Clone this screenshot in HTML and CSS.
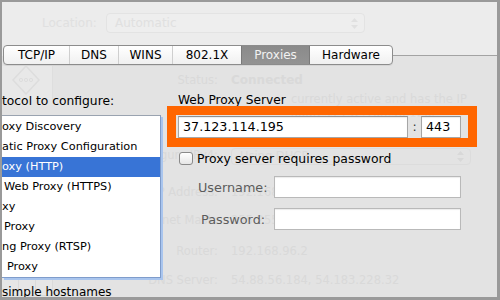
FILE: index.html
```html
<!DOCTYPE html>
<html>
<head>
<meta charset="utf-8">
<link rel="stylesheet" href="styles.css">
</head>
<body>
<div class="frame">
  <div class="ghost">
    <div class="g-left">
      <div class="g-side">
        <svg class="g-diamond" width="28" height="30" viewBox="0 0 28 30"><path d="M14 1 L27 15 L14 29 L1 15 Z" fill="none" stroke="#dddddd" stroke-width="1.5"/><circle cx="9" cy="15" r="1.6" fill="none" stroke="#dddddd"/><circle cx="14" cy="15" r="1.6" fill="none" stroke="#dddddd"/><circle cx="19" cy="15" r="1.6" fill="none" stroke="#dddddd"/></svg>
      </div>
      <div class="g-btns"><span></span><span></span><span></span></div>
    </div>
    <div class="g-right">
      <div class="g-row r-status"><span class="gl">Status:</span><span class="gv gb">Connected</span></div>
      <div class="g-desc">
        <div>currently active and has the IP</div>
        <div>address 192.168.96.126.</div>
      </div>
      <div class="g-row r-conf"><span class="gl">Configure IPv4:</span><span class="g-pop">Using DHCP<svg class="arrows" width="7" height="11" viewBox="0 0 7 11"><path d="M3.5 0 L7 4 L0 4 Z M3.5 11 L7 7 L0 7 Z" fill="#d8d8d8"/></svg></span></div>
      <div class="g-row r-addr"><span class="gl">IP Address:</span><span class="gv">192.168.96.126</span></div>
      <div class="g-row r-mask"><span class="gl">Subnet Mask:</span><span class="gv">255.255.255.0</span></div>
      <div class="g-row r-router"><span class="gl">Router:</span><span class="gv">192.168.96.2</span></div>
      <div class="g-row r-dns"><span class="gl">DNS Server:</span><span class="gv">54.88.56.184, 54.183.228.32</span></div>
    </div>
  </div>

  <div class="top">
    <div class="loc">
      <span class="loc-label">Location:</span>
      <div class="loc-pop"><span>Automatic</span><svg class="arrows" width="7" height="11" viewBox="0 0 7 11"><path d="M3.5 0 L7 4 L0 4 Z M3.5 11 L7 7 L0 7 Z" fill="#e0e0e0"/></svg></div>
    </div>
    <div class="tabrow">
      <div class="tabs">
        <div class="tab w1">TCP/IP</div>
        <div class="tab w2">DNS</div>
        <div class="tab w3">WINS</div>
        <div class="tab w4">802.1X</div>
        <div class="tab w5 sel">Proxies</div>
        <div class="tab w6">Hardware</div>
      </div>
      <div class="tabline"></div>
    </div>
  </div>

  <div class="main">
    <div class="left">
      <div class="heading">tocol to configure:</div>
      <div class="list">
        <div class="item">oxy Discovery</div>
        <div class="item">atic Proxy Configuration</div>
        <div class="item selected">oxy (HTTP)</div>
        <div class="item p2">Web Proxy (HTTPS)</div>
        <div class="item">xy</div>
        <div class="item p2">Proxy</div>
        <div class="item">ng Proxy (RTSP)</div>
        <div class="item p5">Proxy</div>
      </div>
      <div class="hostnames">simple hostnames</div>
    </div>
    <div class="right">
      <div class="server-title">Web Proxy Server</div>
      <div class="highlight">
        <div class="field ip">37.123.114.195</div>
        <span class="colon">:</span>
        <div class="field port">443</div>
      </div>
      <div class="check-row">
        <span class="checkbox"></span>
        <span class="check-label">Proxy server requires password</span>
      </div>
      <div class="cred-row">
        <span class="cred-label">Username:</span>
        <div class="field cred"></div>
      </div>
      <div class="cred-row second">
        <span class="cred-label pw">Password:</span>
        <div class="field cred"></div>
      </div>
    </div>
  </div>
</div>
</body>
</html>
```
FILE: styles.css
```css
* { box-sizing: border-box; }
html, body { margin: 0; padding: 0; }
body {
  width: 500px;
  height: 300px;
  overflow: hidden;
  font-family: "DejaVu Sans", "Liberation Sans", sans-serif;
  color: #000;
}
.frame {
  position: relative;
  z-index: 0;
  width: 500px;
  height: 300px;
  border-style: solid;
  border-color: #9a9a9a;
  border-width: 2px 3px 3px 2px;
  overflow: hidden;
  background: linear-gradient(to bottom, #ececec 0, #ececec 54px, #e3e3e3 54px, #e3e3e3 100%);
}

/* ghost (faded background window) */
.ghost {
  position: absolute;
  inset: 0;
  z-index: -1;
  display: flex;
  color: #d9d9d9;
  font-size: 11.5px;
}
.g-left {
  width: 51px;
  display: flex;
  flex-direction: column;
}
.g-side {
  margin-top: 64px;
  margin-left: -2px;
  height: 34px;
  width: 53px;
  background: #e8e8e8;
  border-right: 1px solid #dedede;
  display: flex;
  justify-content: center;
  overflow: hidden;
}
.g-diamond { margin-top: -1px; }
.g-btns {
  margin-top: auto;
  margin-bottom: 1px;
  display: flex;
  height: 19px;
}
.g-btns span {
  width: 17px;
  border: 1px solid #dadada;
  border-left: none;
  background: #e6e6e6;
}
.g-right {
  display: flex;
  flex-direction: column;
  padding-top: 70px;
}
.g-row {
  display: grid;
  grid-template-columns: 90px auto;
  column-gap: 13px;
  margin-left: 75px;
  line-height: 16px;
  height: 16px;
  white-space: nowrap;
}
.gl { text-align: right; }
.gb { font-weight: bold; font-size: 12px; }
.g-desc {
  margin-top: 4px;
  padding-left: 238px;
  line-height: 14px;
  white-space: nowrap;
}
.r-conf { margin-top: 28px; height: 17px; line-height: 15px; }
.g-pop {
  width: 240px;
  height: 17px;
  border: 1px solid #dcdcdc;
  border-radius: 4px;
  padding-left: 8px;
  padding-right: 6px;
  display: flex;
  align-items: center;
  justify-content: space-between;
}
.r-addr { margin-top: 19px; }
.r-mask { margin-top: 12px; }
.r-router { margin-top: 15px; }
.r-dns { margin-top: 13px; }

/* top area */
.top { display: flex; flex-direction: column; }
.loc {
  margin-top: 11px;
  height: 20px;
  display: flex;
  align-items: center;
  color: #e0e0e0;
  font-size: 12px;
}
.loc-label { margin-left: 40px; width: 64px; }
.loc-pop {
  width: 259px;
  height: 20px;
  border: 1px solid #e3e3e3;
  border-radius: 4px;
  background: #eeeeee;
  display: flex;
  align-items: center;
  justify-content: space-between;
  padding: 0 6px 0 8px;
}
.tabrow {
  margin-top: 12px;
  height: 20px;
  display: flex;
  align-items: center;
}
.tabs {
  margin-left: 1px;
  height: 20px;
  display: flex;
  border: 1px solid #8c8c8c;
  border-radius: 4px;
  background: linear-gradient(to bottom, #ffffff, #f0f0f0);
  overflow: hidden;
  box-shadow: 0 1px 0 rgba(0,0,0,0.06);
}
.tab {
  font-size: 12px;
  line-height: 18px;
  text-align: center;
  border-left: 1px solid #cfcfcf;
}
.tab.w1 { width: 65px; border-left: none; }
.tab.w2 { width: 49px; }
.tab.w3 { width: 54px; }
.tab.w4 { width: 69px; }
.tab.w5 { width: 68px; }
.tab.w6 { width: 83px; border-left: 1px solid #7a7a7a; }
.tab.sel {
  background: linear-gradient(to bottom, #8a8a8a, #939393);
  color: #f2f2f2;
  border-left: 1px solid #7a7a7a;
}
.tabline {
  flex: 1;
  height: 1px;
  background: #a3a3a3;
}

/* main */
.main { display: flex; }
.left {
  width: 159px;
  display: flex;
  flex-direction: column;
}
.heading {
  margin-top: 28px;
  font-size: 12.3px;
  line-height: 16px;
  white-space: nowrap;
}
.list {
  margin-top: 6px;
  background: #fff;
  border-top: 1px solid #9aa3b0;
  border-right: 1px solid #7f9ccb;
  border-bottom: 1px solid #7f9ccb;
  padding-top: 1px;
  box-shadow: 2px 2px 0 0 #a9c5ee;
}
.item {
  height: 20px;
  line-height: 20px;
  font-size: 11.3px;
  white-space: nowrap;
  overflow: hidden;
}
.item.p2 { padding-left: 2px; }
.item.p5 { padding-left: 5px; }
.item.selected {
  background: #3874d6;
  color: #fff;
}
.hostnames {
  margin-top: 7px;
  font-size: 12px;
  line-height: 14px;
  white-space: nowrap;
}

.right {
  margin-left: 6px;
  display: flex;
  flex-direction: column;
}
.server-title {
  margin-top: 28px;
  padding-left: 11px;
  font-size: 12.2px;
  line-height: 14px;
}
.highlight {
  margin-top: -1px;
  width: 310px;
  height: 41px;
  border: 9px solid #ff6600;
  display: flex;
  align-items: center;
  padding-left: 2px;
}
.field {
  background: #fff;
  border: 1px solid #a6a6a6;
  border-top-color: #8f8f8f;
  box-shadow: inset 0 1px 1px rgba(0,0,0,0.08);
  height: 22px;
  line-height: 20px;
  padding-left: 4px;
  font-size: 12.7px;
}
.field.ip { width: 230px; }
.colon {
  width: 13px;
  text-align: center;
  font-size: 12.5px;
  color: #333;
}
.field.port { width: 40px; }
.check-row {
  margin-top: 5px;
  margin-left: 12px;
  display: flex;
  align-items: center;
  height: 13px;
}
.checkbox {
  width: 14px;
  height: 13px;
  border: 1px solid #8a8a8a;
  border-radius: 3px;
  background: linear-gradient(to bottom, #ffffff, #e6e6e6);
}
.check-label {
  margin-left: 4px;
  font-size: 12.4px;
  white-space: nowrap;
}
.cred-row {
  margin-top: 11px;
  display: flex;
  align-items: center;
}
.cred-row.second { margin-top: 10px; }
.cred-label {
  width: 107px;
  padding-left: 31px;
  font-size: 12.8px;
  color: #5c5c5c;
}
.cred-label.pw { padding-left: 34px; }
.field.cred { width: 187px; border-color: #b9b9b9; }
```
